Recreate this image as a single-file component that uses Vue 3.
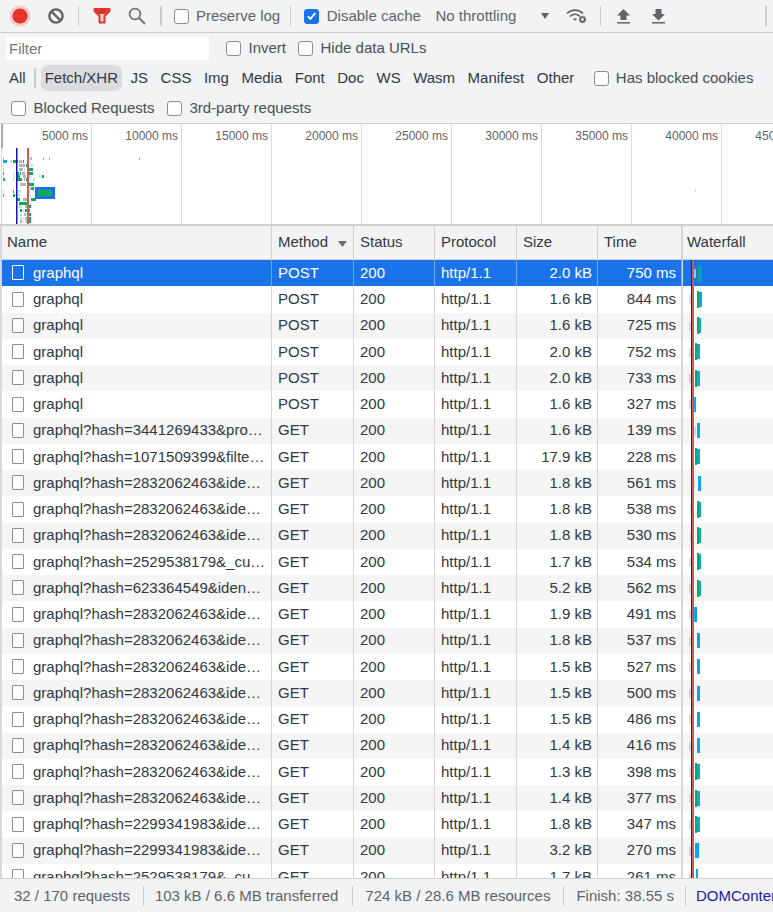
<script setup>
const typeFilters = ['JS', 'CSS', 'Img', 'Media', 'Font', 'Doc', 'WS', 'Wasm', 'Manifest', 'Other']
const ticks = ['5000 ms', '10000 ms', '15000 ms', '20000 ms', '25000 ms', '30000 ms', '35000 ms', '40000 ms', '45000 ms']

const colours = { g: '#b5b5b5', c: '#b9e6fb', b: '#0aa5f0', n: '#12a85a' }
const marks = [
  [3,157,1,'g'],[30,157,2,'g'],[43,157,1,'g'],[49,157,1,'g'],[139,157,1,'g'],
  [3,160,4,'b'],[10,160,2,'c'],[13,160,3,'n'],[17,160,1,'b'],[19,160,3,'g'],[23,160,1,'n'],[27,160,1,'c'],
  [3,164,1,'c'],[19,164,6,'g'],[26,164,1,'n'],[30,164,3,'c'],
  [3,168,1,'c'],[19,168,4,'g'],[24,168,1,'c'],[29,168,4,'n'],
  [3,172,1,'b'],[13,172,1,'c'],[17,172,2,'n'],[20,172,1,'b'],[22,172,3,'g'],[29,172,4,'n'],
  [3,175,1,'c'],[14,175,1,'c'],[17,175,3,'n'],[23,175,3,'g'],[28,175,3,'c'],[39,175,2,'c'],[42,175,2,'n'],
  [3,178,2,'b'],[13,178,1,'c'],[16,178,6,'n'],[24,178,1,'g'],[26,178,3,'n'],[33,178,2,'c'],
  [20,183,6,'g'],[28,183,6,'n'],
  [28,187,3,'c'],[31,187,3,'n'],
  [3,190,1,'c'],[13,190,1,'b'],[18,190,3,'c'],[29,190,1,'c'],[695,189,1,'c'],
  [3,194,1,'b'],[13,194,2,'n'],[18,194,2,'c'],[30,194,1,'c'],
  [17,198,3,'n'],[23,198,5,'g'],[31,198,5,'n'],
  [19,202,10,'n'],[30,202,1,'c'],
  [19,205,3,'c'],[25,205,2,'g'],[28,205,3,'n'],
  [20,209,2,'n'],[23,209,1,'c'],[25,209,5,'n'],
  [20,213,2,'c'],[24,213,2,'g'],[28,213,3,'n'],
  [20,217,3,'c'],[25,217,2,'g'],[29,217,2,'n'],
  [20,220,2,'g'],[23,220,1,'c'],[26,220,2,'g'],[29,220,2,'n'],
]

const G = 'graphql?hash='
const raw = [
  ['graphql', 'POST', '2.0 kB', '750 ms', 693, 3, 697, 3, 700, 1],
  ['graphql', 'POST', '1.6 kB', '844 ms', 689, 5, 697, 2, 699, 3],
  ['graphql', 'POST', '1.6 kB', '725 ms', 689, 5, 697, 2, 699, 2],
  ['graphql', 'POST', '2.0 kB', '752 ms', 689, 2, 695, 2, 697, 3],
  ['graphql', 'POST', '2.0 kB', '733 ms', 689, 2, 695, 2, 697, 3],
  ['graphql', 'POST', '1.6 kB', '327 ms', 689, 3, 0, 0, 693, 3],
  [G + '3441269433&pro…', 'GET', '1.6 kB', '139 ms', 692, 4, 0, 0, 697, 3],
  [G + '1071509399&filte…', 'GET', '17.9 kB', '228 ms', 691, 2, 695, 2, 697, 3],
  [G + '2832062463&ide…', 'GET', '1.8 kB', '561 ms', 692, 3, 0, 0, 698, 3],
  [G + '2832062463&ide…', 'GET', '1.8 kB', '538 ms', 690, 3, 697, 2, 699, 2],
  [G + '2832062463&ide…', 'GET', '1.8 kB', '530 ms', 690, 3, 697, 2, 699, 2],
  [G + '2529538179&_cu…', 'GET', '1.7 kB', '534 ms', 689, 5, 697, 2, 699, 2],
  [G + '623364549&iden…', 'GET', '5.2 kB', '562 ms', 689, 5, 697, 2, 699, 2],
  [G + '2832062463&ide…', 'GET', '1.9 kB', '491 ms', 689, 4, 0, 0, 694, 3],
  [G + '2832062463&ide…', 'GET', '1.8 kB', '537 ms', 689, 5, 0, 0, 697, 3],
  [G + '2832062463&ide…', 'GET', '1.5 kB', '527 ms', 689, 5, 0, 0, 697, 3],
  [G + '2832062463&ide…', 'GET', '1.5 kB', '500 ms', 689, 5, 0, 0, 697, 3],
  [G + '2832062463&ide…', 'GET', '1.5 kB', '486 ms', 689, 5, 0, 0, 697, 3],
  [G + '2832062463&ide…', 'GET', '1.4 kB', '416 ms', 689, 5, 0, 0, 697, 3],
  [G + '2832062463&ide…', 'GET', '1.3 kB', '398 ms', 689, 2, 695, 2, 697, 3],
  [G + '2832062463&ide…', 'GET', '1.4 kB', '377 ms', 689, 2, 695, 2, 697, 3],
  [G + '2299341983&ide…', 'GET', '1.8 kB', '347 ms', 689, 2, 695, 2, 697, 3],
  [G + '2299341983&ide…', 'GET', '3.2 kB', '270 ms', 689, 2, 0, 0, 695, 4],
  [G + '2529538179&_cu…', 'GET', '1.7 kB', '261 ms', 689, 2, 0, 0, 696, 2],
]
const rows = raw.map(r => ({
  name: r[0], method: r[1], size: r[2], time: r[3],
  gray: { left: r[4] - 683 + 'px', width: r[5] + 'px' },
  green: r[7] ? { left: r[6] - 683 + 'px', width: r[7] + 'px' } : null,
  blue: { left: r[8] - 683 + 'px', width: r[9] + 'px' },
}))
</script>

<template>
  <div class="app">
    <div class="toolbar">
      <svg class="ico rec" width="24" height="24" viewBox="0 0 24 24"><circle cx="12" cy="12" r="10.5" fill="#f4c9c6"/><circle cx="12" cy="12" r="7.6" fill="#e5332a"/></svg>
      <svg class="ico clr" width="18" height="18" viewBox="0 0 18 18"><circle cx="9" cy="9" r="6.6" fill="none" stroke="#5f6368" stroke-width="2.4"/><path d="M4.4 4.4l9.2 9.2" stroke="#5f6368" stroke-width="2.4"/></svg>
      <span class="sep s1"></span>
      <svg class="ico fun" width="20" height="18" viewBox="0 0 20 18"><path d="M2.500 2h15v2l-5 5v6.500h-5V9l-5-5z" fill="#f6d5d2" stroke="#e0352b" stroke-width="2" stroke-linejoin="round"/><path d="M3 3h14l-3.500 4h-7z" fill="#e0352b"/></svg>
      <svg class="ico sea" width="20" height="20" viewBox="0 0 20 20"><circle cx="8" cy="8" r="5.4" fill="none" stroke="#6f7378" stroke-width="1.7"/><path d="M12 12l6 6" stroke="#6f7378" stroke-width="2"/></svg>
      <span class="sep s2"></span>
      <label class="chk l1"><span class="box"></span>Preserve log</label>
      <span class="sep s3"></span>
      <label class="chk l2"><span class="box on"><svg width="14" height="14" viewBox="0 0 14 14"><path d="M3 7.400l2.800 2.800L11 4" fill="none" stroke="#fff" stroke-width="2"/></svg></span>Disable cache</label>
      <span class="throttle">No throttling</span>
      <svg class="ico arr" width="8" height="6" viewBox="0 0 8 6"><path d="M0 0h8L4 6z" fill="#5f6368"/></svg>
      <svg class="ico wifi" width="22" height="18" viewBox="0 0 22 18"><g fill="none" stroke="#5f6368" stroke-width="1.700"><path d="M1 6.500C5.500 2 12.500 2 17 6.500"/><path d="M4 9.500c3-2.800 7-2.800 10 0"/></g><path d="M7 12c1.200-1 2.800-1 4 0l-2 1.800z" fill="#5f6368"/><circle cx="16.500" cy="12.500" r="2.300" fill="none" stroke="#5f6368" stroke-width="1.800"/><path d="M16.500 8.800v1.500M16.500 14.700v1.500M12.800 12.500h1.500M18.700 12.500h1.500M13.900 9.900l1 1M18.100 14.100l1 1M13.900 15.100l1-1M18.100 10.900l1-1" stroke="#5f6368" stroke-width="1.100"/></svg>
      <span class="sep s4"></span>
      <svg class="ico up" width="13" height="15" viewBox="0 0 13 15"><path d="M6.500 0L13 6.500H9.500V11h-6V6.500H0z" fill="#5f6368"/><path d="M0 13.800h13" stroke="#5f6368" stroke-width="1.500"/></svg>
      <svg class="ico down" width="13" height="15" viewBox="0 0 13 15"><path d="M3.500 0h6v5H13l-6.500 6.500L0 5h3.500z" fill="#5f6368"/><path d="M0 13.800h13" stroke="#5f6368" stroke-width="1.500"/></svg>
      <span class="sep s5"></span>
    </div>

    <div class="filters">
      <div class="frow r1">
        <div class="input">Filter</div>
        <label class="chk i1"><span class="box"></span>Invert</label>
        <label class="chk i2"><span class="box"></span>Hide data URLs</label>
      </div>
      <div class="frow r2">
        <span class="type">All</span>
        <span class="tsep"></span>
        <span class="type active">Fetch/XHR</span>
        <span v-for="t in typeFilters" :key="t" class="type">{{ t }}</span>
        <label class="chk b1"><span class="box"></span>Has blocked cookies</label>
      </div>
      <div class="frow r3">
        <label class="chk"><span class="box"></span>Blocked Requests</label>
        <label class="chk c2"><span class="box"></span>3rd-party requests</label>
      </div>
    </div>

    <div class="overview">
      <div v-for="t in ticks" :key="t" class="tick">{{ t }}</div>
      <svg class="mini" width="773" height="100" viewBox="0 124 773 100">
        <rect x="1" y="124" width="2" height="24" fill="#a9a9a9"/>
        <rect x="1" y="148" width="1" height="76" fill="#d8d8d8"/>
        <g class="soft">
          <rect v-for="(m, i) in marks" :key="i" :x="m[0]" :y="m[1]" :width="m[2]" height="3" :fill="colours[m[3]]"/>
        </g>
        <rect x="35" y="187" width="20" height="12" fill="#1a73e8"/>
        <rect x="38" y="190" width="14" height="6" fill="#12a85a"/>
        <rect x="16" y="148" width="1.500" height="76" fill="#1414b4"/>
        <rect x="27" y="148" width="2" height="76" fill="#cf5a5a"/>
      </svg>
    </div>

    <div class="table">
      <div class="grid head">
        <div class="cell">Name</div>
        <div class="cell sort">Method<svg width="9" height="6" viewBox="0 0 9 6"><path d="M0 0h9L4.500 6z" fill="#6b6f75"/></svg></div>
        <div class="cell">Status</div>
        <div class="cell">Protocol</div>
        <div class="cell">Size</div>
        <div class="cell">Time</div>
        <div class="cell wf">Waterfall</div>
      </div>
      <div class="body">
        <div v-for="(r, i) in rows" :key="i" class="grid row" :class="{ sel: i === 0, alt: i % 2 === 0 }">
          <div class="cell name"><span class="file"></span><span class="nm">{{ r.name }}</span></div>
          <div class="cell">{{ r.method }}</div>
          <div class="cell">200</div>
          <div class="cell">http/1.1</div>
          <div class="cell num">{{ r.size }}</div>
          <div class="cell num">{{ r.time }}</div>
          <div class="cell wf">
            <i class="bar gray" :style="r.gray"></i>
            <i v-if="r.green" class="bar green" :style="r.green"></i>
            <i class="bar blue" :style="r.blue"></i>
          </div>
        </div>
        <i class="vline dcl"></i>
        <i class="vline load"></i>
      </div>
    </div>

    <div class="footer">
      <span class="fs f1">32 / 170 requests</span>
      <span class="fs f2">103 kB / 6.6 MB transferred</span>
      <span class="fs f3">724 kB / 28.6 MB resources</span>
      <span class="fs f4">Finish: 38.55 s</span>
      <span class="fs link">DOMContentLoaded: 1.27 s</span>
    </div>
  </div>
</template>

<style>
html, body { margin: 0; background: #fff; }
</style>

<style scoped>
.app {
  width: 773px; height: 912px; overflow: hidden; display: flex; flex-direction: column;
  font: 15px/20px "Liberation Sans", Arial, sans-serif; color: #303942; background: #fff;
}
.toolbar {
  height: 32px; flex: none; display: flex; align-items: center; background: #f1f3f5;
  border-bottom: 1px solid #cdd0d4; color: #5f6368; white-space: nowrap;
}
.ico { flex: none; display: block; }
.rec { margin-left: 8px; margin-top: -1px; }
.clr { margin-left: 15px; }
.s1 { margin-left: 13px; }
.fun { margin-left: 13px; }
.sea { margin-left: 15px; margin-top: -1px; }
.s2 { margin-left: 13px; }
.sep { flex: none; width: 1px; height: 20px; background: #c9cbcf; }
.s2, .s5 { width: 2px; }
.l1 { margin-left: 11.500px; }
.s3 { margin-left: 10px; }
.l2 { margin-left: 13px; }
.throttle { margin-left: 14.500px; }
.arr { margin-left: 25px; margin-top: -1px; }
.wifi { margin-left: 17px; margin-top: -1px; }
.s4 { margin-left: 12px; }
.up { margin-left: 16px; }
.down { margin-left: 22px; }
.s5 { margin-left: 100px; }

.chk { display: flex; align-items: center; gap: 7.500px; flex: none; white-space: nowrap; color: #5f6368; }
.box {
  flex: none; width: 13px; height: 13px; background: #fff; border: 1px solid #8b8d90; border-radius: 3px;
  display: flex; align-items: center; justify-content: center;
}
.box.on { background: #1a73e8; border-color: #1a73e8; }

.filters { height: 90px; flex: none; background: #f1f3f5; display: flex; flex-direction: column; }
.frow { height: 30px; display: flex; align-items: center; flex: none; white-space: nowrap; }
.input {
  width: 203px; height: 23px; margin-left: 6px; padding-left: 3px; box-sizing: border-box; background: #fff;
  color: #757575; line-height: 24px; flex: none;
}
.i1 { margin-left: 17px; color: #4a4f55; }
.i2 { margin-left: 12px; color: #4a4f55; }
.r2 { gap: 4.500px; padding-left: 5px; color: #303942; }
.type { height: 26px; line-height: 26px; padding: 0 4px; border-radius: 7px; flex: none; }
.type.active { background: #dadce0; }
.tsep { width: 2px; height: 20px; background: #c9cbcf; flex: none; }
.b1 { margin-left: 11px; color: #4a4f55; gap: 7px; }
.r3 { padding-left: 11px; }
.r3 .chk { color: #4a4f55; }
.c2 { margin-left: 12.500px; }

.overview {
  height: 100px; flex: none; display: flex; position: relative; padding-left: 2px; overflow: hidden;
  border-top: 1px solid #cdd0d4; border-bottom: 2px solid #cdd0d4; background: #fff;
  font-size: 12px; color: #5f6368; box-sizing: content-box;
}
.tick {
  flex: none; width: 90px; box-sizing: border-box; border-right: 1px solid #dadce0; text-align: right;
  padding: 2px 3px 0 0; white-space: nowrap;
}
.mini { position: absolute; left: 0; top: 0; pointer-events: none; }
.soft { filter: blur(0.35px); }

.table { flex: 1; min-height: 0; display: flex; flex-direction: column; border-left: 2px solid #d6d8db; overflow: hidden; }
.grid { display: grid; grid-template-columns: 270px 82px 81px 82px 81px 84px 1fr; flex: none; }
.cell {
  padding: 0 6px; border-right: 1px solid #d5d7da; white-space: nowrap; overflow: hidden;
  display: flex; align-items: center; min-width: 0;
}
.head { height: 33px; background: #f3f3f4; border-bottom: 1px solid #cdd0d4; }
.head .cell { border-right-color: #cdd0d4; padding-bottom: 1px; }
.head .cell:first-child { padding-left: 5px; }
.head .wf { padding-left: 4px; border-right: 0; }
.sort svg { margin-left: 10px; margin-top: 3px; }
.wf { border-right: 0; border-left: 1px solid #d5d7da; }
.body { flex: 1; min-height: 0; position: relative; overflow: hidden; }
.row { height: 26.250px; background: #fff; }
.row .cell { padding-bottom: 0.500px; }
.row.alt { background: #f5f5f5; }
.row.sel { background: #1a73e8; color: #fff; }
.row.sel .cell { border-right-color: #6ea6ef; }
.row .num { justify-content: flex-end; padding-right: 5px; }
.row .name { padding-left: 10px; gap: 9px; }
.file {
  flex: none; width: 10px; height: 13px; background: #fff; border: 1px solid #8b8d90; border-radius: 1px;
}
.row.sel .file { background: transparent; border-color: #fff; }
.nm { overflow: hidden; }
.row .wf { position: relative; padding: 0; overflow: hidden; }
.bar { position: absolute; top: 5.500px; height: 15px; display: block; }
.gray { background: rgba(0, 0, 0, .13); top: 9px; height: 9px; }
.row.sel .gray { background: rgba(255, 255, 255, .55); }
.green { background: #12a85a; top: 4.500px; height: 17px; }
.blue { background: #0aa5f0; }
.vline { position: absolute; top: 0; bottom: 0; width: 1.500px; display: block; }
.dcl { left: 688.500px; background: #1b1bb0; }
.load { left: 690px; width: 1.500px; background: #cf5a5a; }

.footer {
  height: 33px; flex: none; display: flex; align-items: center; background: #f1f3f5;
  border-top: 1px solid #cdd0d4; color: #5f6368; white-space: nowrap; overflow: hidden;
}
.fs { flex: none; border-right: 1px solid #c9cbcf; height: 20px; }
.f1 { padding: 0 13px 0 14px; }
.f2 { padding: 0 14px 0 11px; }
.f3 { padding: 0 13px 0 12px; }
.f4 { padding: 0 11px 0 12px; }
.link { padding-left: 10px; color: #1a1aa6; border: 0; }
</style>
